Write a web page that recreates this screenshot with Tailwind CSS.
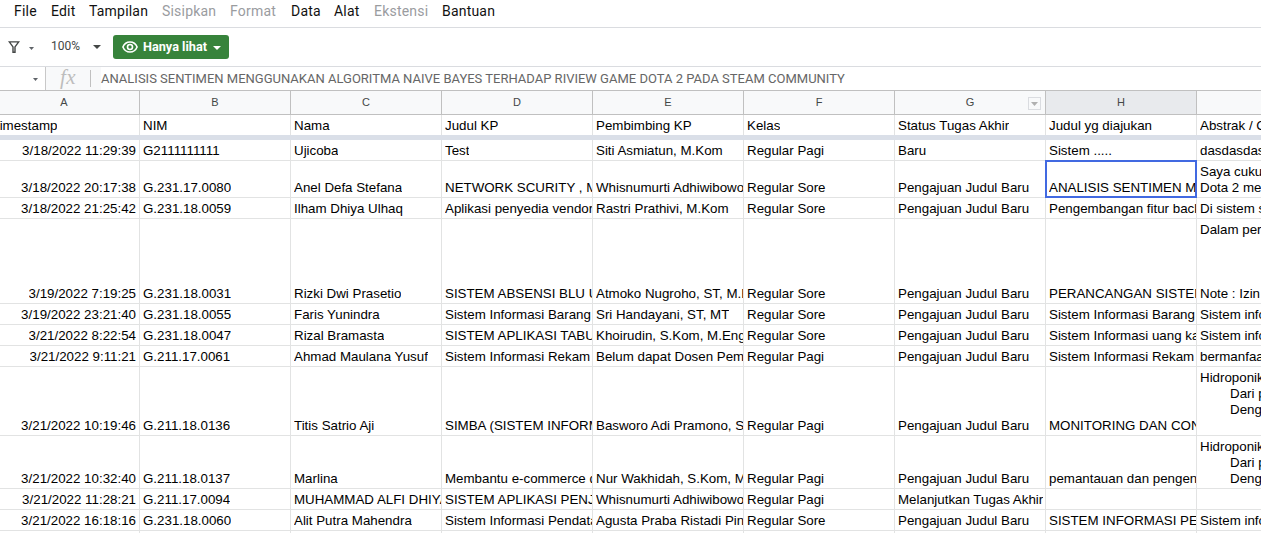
<!DOCTYPE html>
<html lang="id">
<head>
<meta charset="utf-8">
<title>Spreadsheet</title>
<script src="https://cdn.jsdelivr.net/npm/@tailwindcss/browser@4"></script>
</head>
<body class="w-[1261px] h-[533px] overflow-hidden bg-white font-['Roboto',sans-serif] text-black">
<div class="flex flex-col w-full h-full overflow-hidden">
  <nav class="flex h-[28px] shrink-0 border-b border-[#dadce0] pl-[14px] gap-[14px] text-[14px] leading-[23px] tracking-[0.2px] whitespace-nowrap text-[#111]">
    <span class="w-[23px]">File</span><span class="w-[24px]">Edit</span><span class="w-[59px]">Tampilan</span><span class="w-[54px] text-[#9a9c9f]">Sisipkan</span><span class="w-[47px] text-[#9a9c9f]">Format</span><span class="w-[29px]">Data</span><span class="w-[26px]">Alat</span><span class="w-[54px] text-[#9a9c9f]">Ekstensi</span><span>Bantuan</span>
  </nav>
  <div class="flex items-center h-[39px] shrink-0 border-b border-[#dadce0] pl-[8px]">
    <svg class="w-[12px] h-[12px]" viewBox="0 0 12 12" fill="none" stroke="#444746" stroke-width="1.4"><path d="M1.300.9h9.400L7 5.900v5.400H5V5.900z"/></svg>
    <svg class="ml-[9px] mt-[2px] w-[5px] h-[3px]" viewBox="0 0 5 3" fill="#5f6368"><path d="M0 0h5L2.500 3z"/></svg>
    <span class="ml-[17px] mb-[2px] w-[30px] text-[12px] leading-[16px] text-[#444746]">100%</span>
    <svg class="ml-[12px] w-[8px] h-[4px]" viewBox="0 0 8 4" fill="#444746"><path d="M0 0h8L4 4z"/></svg>
    <div class="ml-[12px] flex items-center w-[116px] h-[24px] rounded-[3px] bg-[#37833b] pl-[9px] text-white">
      <svg class="w-[16px] h-[12px] shrink-0" viewBox="0 0 16 12" fill="none" stroke="#fff" stroke-width="1.6"><path d="M.9 6C2.200 2.900 4.800 1 8 1s5.800 1.900 7.100 5C13.800 9.100 11.200 11 8 11S2.200 9.100.9 6z"/><circle cx="8" cy="6" r="2.500"/></svg>
      <span class="ml-[5px] w-[65px] text-[12.700px] leading-[16px] font-bold whitespace-nowrap">Hanya lihat</span>
      <svg class="ml-[5px] mt-[2px] w-[8px] h-[4px] shrink-0" viewBox="0 0 8 4" fill="#fff"><path d="M0 0h8L4 4z"/></svg>
    </div>
  </div>
  <div class="flex items-center h-[23px] shrink-0">
    <svg class="ml-[33px] mt-[2px] w-[5px] h-[3px]" viewBox="0 0 5 3" fill="#5f6368"><path d="M0 0h5L2.500 3z"/></svg>
    <div class="ml-[7px] flex items-center w-[56px] h-full bg-[#f8f9fa]">
      <span class="w-px h-full bg-[#c8c8c8]"></span>
      <span class="ml-[14px] w-[30px] -mt-[4px] font-['Liberation_Serif',serif] italic text-[21px] leading-[20px] tracking-[0.5px] text-[#bdbdbd]">fx</span>
      <span class="w-px h-[17px] bg-[#c0c0c0]"></span>
    </div>
    <span class="text-[13px] leading-[20px] whitespace-nowrap text-[#666]">ANALISIS SENTIMEN MENGGUNAKAN ALGORITMA NAIVE BAYES TERHADAP RIVIEW GAME DOTA 2 PADA STEAM COMMUNITY</span>
  </div>
  <div id="letters" class="flex h-[25px] w-[1348px] shrink-0 border-y border-[#c0c0c0] bg-[#f8f9fa] font-['Liberation_Sans',Arial,sans-serif] text-[11px] leading-[23px] text-[#444746] text-center"></div>
  <div id="sheet" class="w-[1348px] shrink-0 font-['Liberation_Sans',Arial,sans-serif] text-[13.333px] leading-[16px]"></div>
</div>
<script>
const letters = ['A','B','C','D','E','F','G','H',''];
document.getElementById('letters').innerHTML = letters.map((l, i) =>
  `<div class="relative h-full shrink-0 border-r border-[#c0c0c0] ${i ? 'w-[151px]' : 'w-[140px] pr-[11px]'} ${l === 'H' ? 'bg-[#e8eaed]' : ''}">${l}${l === 'G' ? '<span class="absolute right-[4px] top-[6px] w-[13px] h-[13px] border border-[#dadce0] flex items-center justify-center"><svg class="w-[7px] h-[4px]" viewBox="0 0 7 4" fill="#b0b0b0"><path d="M0 0h7L3.500 4z"/></svg></span>' : ''}</div>`).join('');

const rows = [
  [20, 'Timestamp','NIM','Nama','Judul KP','Pembimbing KP','Kelas','Status Tugas Akhir','Judul yg diajukan','Abstrak / Gambaran'],
  [21, '3/18/2022 11:29:39','G2111111111','Ujicoba','Test','Siti Asmiatun, M.Kom','Regular Pagi','Baru','Sistem .....','dasdasdasdas'],
  [37, '3/18/2022 20:17:38','G.231.17.0080','Anel Defa Stefana','NETWORK SCURITY , MIKROTIK','Whisnumurti Adhiwibowo','Regular Sore','Pengajuan Judul Baru','ANALISIS SENTIMEN MENGGUNAKAN','Saya cukup\nDota 2 merupakan'],
  [21, '3/18/2022 21:25:42','G.231.18.0059','Ilham Dhiya Ulhaq','Aplikasi penyedia vendor','Rastri Prathivi, M.Kom','Regular Sore','Pengajuan Judul Baru','Pengembangan fitur backend','Di sistem saat'],
  [85, '3/19/2022 7:19:25','G.231.18.0031','Rizki Dwi Prasetio','SISTEM ABSENSI BLU UNIT','Atmoko Nugroho, ST, M.Eng','Regular Sore','Pengajuan Judul Baru','PERANCANGAN SISTEM','Dalam perancangan\n\n\n\nNote : Izin pak'],
  [21, '3/19/2022 23:21:40','G.231.18.0055','Faris Yunindra','Sistem Informasi Barang','Sri Handayani, ST, MT','Regular Sore','Pengajuan Judul Baru','Sistem Informasi Barang','Sistem informasi'],
  [21, '3/21/2022 8:22:54','G.231.18.0047','Rizal Bramasta','SISTEM APLIKASI TABUNGAN','Khoirudin, S.Kom, M.Eng','Regular Sore','Pengajuan Judul Baru','Sistem Informasi uang kas','Sistem informasi'],
  [21, '3/21/2022 9:11:21','G.211.17.0061','Ahmad Maulana Yusuf','Sistem Informasi Rekam','Belum dapat Dosen Pembimbing','Regular Pagi','Pengajuan Judul Baru','Sistem Informasi Rekam','bermanfaat'],
  [69, '3/21/2022 10:19:46','G.211.18.0136','Titis Satrio Aji','SIMBA (SISTEM INFORMASI','Basworo Adi Pramono, S.Kom','Regular Pagi','Pengajuan Judul Baru','MONITORING DAN CONTROL','Hidroponik\n\tDari p\n\tDengan\n '],
  [53, '3/21/2022 10:32:40','G.211.18.0137','Marlina','Membantu e-commerce dalam','Nur Wakhidah, S.Kom, M.Cs','Regular Pagi','Pengajuan Judul Baru','pemantauan dan pengendalian','Hidroponik\n\tDari p\n\tDengan'],
  [21, '3/21/2022 11:28:21','G.211.17.0094','MUHAMMAD ALFI DHIYAUL','SISTEM APLIKASI PENJUALAN','Whisnumurti Adhiwibowo','Regular Pagi','Melanjutkan Tugas Akhir','',''],
  [21, '3/21/2022 16:18:16','G.231.18.0060','Alit Putra Mahendra','Sistem Informasi Pendataan','Agusta Praba Ristadi Pinem','Regular Sore','Pengajuan Judul Baru','SISTEM INFORMASI PENJUALAN','Sistem informasi'],
  [21, '','','','','','','','',''],
];
document.getElementById('sheet').innerHTML = rows.map(([h, ...cells], r) =>
  `<div class="flex ${r ? 'border-b border-[#e2e3e3]' : ''}" style="height:${h}px">` + cells.map((c, i) =>
    `<div class="relative h-full shrink-0 flex items-end border-r border-[#e2e3e3] pb-[1px] ${i ? 'w-[151px] pl-[3px]' : r ? 'w-[140px] justify-end pr-[3px]' : 'w-[140px]'}"><div class="whitespace-pre overflow-hidden ${!r && !i ? '-ml-[8px]' : ''}">${c.replace(/\t/g, '<span class="inline-block w-[30px]"></span>')}</div>${r === 2 && i === 7 ? '<span class="absolute -left-[1px] -top-[1px] w-[152px] h-[38px] border-2 border-[#4169e1] z-10"></span>' : ''}</div>`).join('') +
  '</div>' + (r ? '' : '<div class="h-[5px] bg-[#dadfe8]"></div>')).join('');
</script>
</body>
</html>
